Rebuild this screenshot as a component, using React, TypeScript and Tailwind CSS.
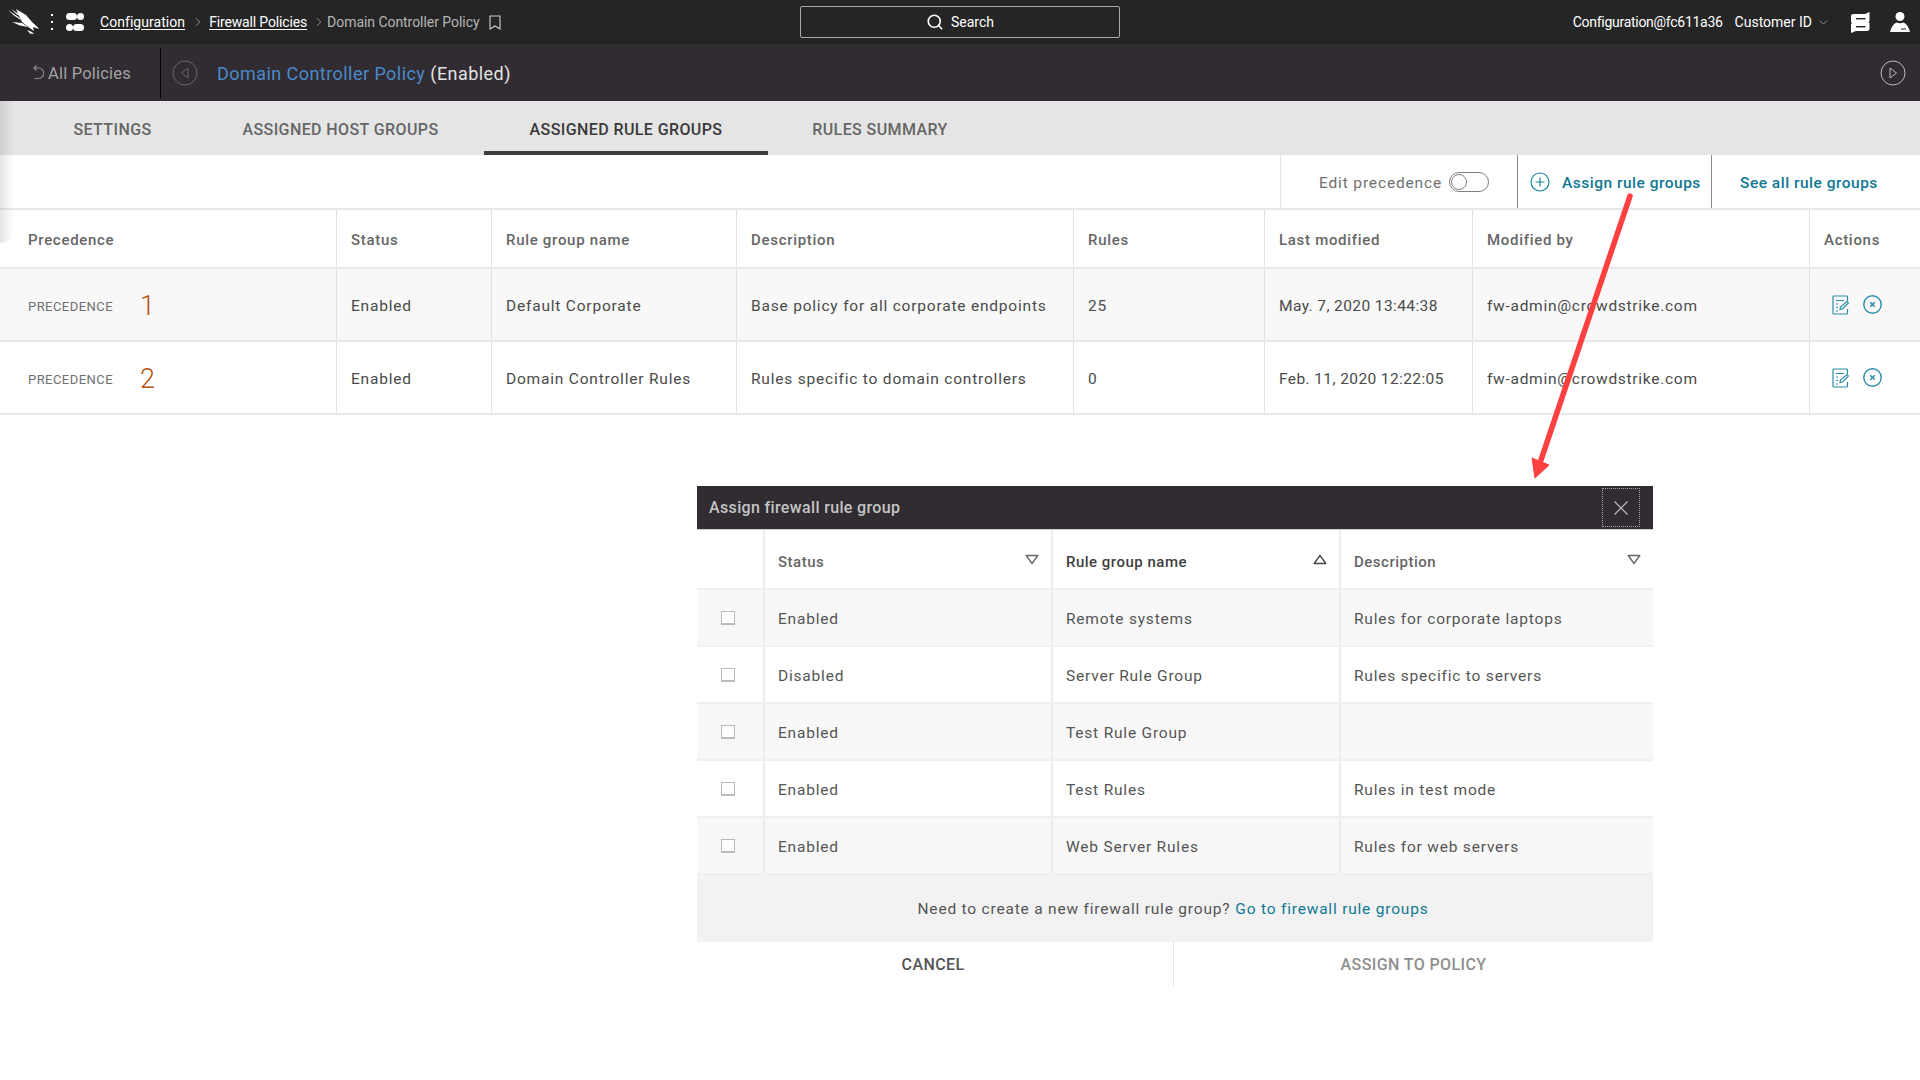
import { ChevronDown, ChevronRight, Search } from "lucide-react";

const font = "font-['Roboto','Liberation_Sans',sans-serif]";

const ruleRows = [
  {
    n: "1",
    status: "Enabled",
    name: "Default Corporate",
    desc: "Base policy for all corporate endpoints",
    rules: "25",
    modified: "May. 7, 2020 13:44:38",
  },
  {
    n: "2",
    status: "Enabled",
    name: "Domain Controller Rules",
    desc: "Rules specific to domain controllers",
    rules: "0",
    modified: "Feb. 11, 2020 12:22:05",
  },
];

const modalRows = [
  ["Enabled", "Remote systems", "Rules for corporate laptops"],
  ["Disabled", "Server Rule Group", "Rules specific to servers"],
  ["Enabled", "Test Rule Group", ""],
  ["Enabled", "Test Rules", "Rules in test mode"],
  ["Enabled", "Web Server Rules", "Rules for web servers"],
];

const tableCols = "grid grid-cols-[336px_155px_245px_337px_191px_208px_337px_111px]";
const modalCols = "grid grid-cols-[66px_288px_288px_314px]";
const cell = "flex items-center border-l border-[#e2e2e2] pl-[14px] pt-[3px]";
const rowCell = "flex items-center border-l border-[#e2e2e2] pl-[14px] pt-[5px]";

function Falcon() {
  return (
    <svg width="32" height="26" viewBox="0 0 32 26" fill="white">
      <path d="M0 1 L12 9 L13 11 L6 6.5 Z" />
      <path d="M3 0 L14 7 L15 9 L9 5.5 Z" />
      <path d="M8 0 L18 6 L24 13 L30 18.5 L31 20 L25 18 L26 22 L21 18.5 L14 13 Z" />
      <path d="M4 13 L14 14 L20 18 L12 16.5 Z" />
      <path d="M19 21 L24 23 L26 25 L22 24.5 Z" />
    </svg>
  );
}

function PillsIcon() {
  return (
    <svg width="18" height="18" viewBox="0 0 18 18" fill="white">
      <rect x="0" y="0" width="11" height="7" rx="3.5" />
      <circle cx="14.5" cy="3.5" r="3.5" />
      <circle cx="3.5" cy="14.5" r="3.5" />
      <rect x="7" y="11" width="11" height="7" rx="3.5" />
    </svg>
  );
}

function StackIcon() {
  return (
    <svg width="19" height="21" viewBox="0 0 19 21" fill="white">
      <path d="M0 4 Q0 2 3 2 H14 L18.5 0 V9 L17.5 10 L18.5 11 V17 Q18.5 19 16 19 H5 L0 21 V12 L1 11 L0 10 Z" />
      <rect x="5" y="6" width="9.5" height="1.4" fill="#252525" />
      <rect x="5" y="14" width="9.5" height="1.4" fill="#252525" />
    </svg>
  );
}

function UserIcon() {
  return (
    <svg width="20" height="20" viewBox="0 0 20 20" fill="white">
      <circle cx="10" cy="4.5" r="4.5" />
      <path d="M6.5 10.5 Q10 12 13.5 10.5 Q18 12.5 20 20 L0 20 Q2 12.5 6.5 10.5 Z" />
      <rect x="11" y="16.5" width="5" height="1" fill="#252525" />
    </svg>
  );
}

function BookmarkIcon() {
  return (
    <svg width="12" height="15" viewBox="0 0 12 15" fill="none" stroke="#cfcfcf" strokeWidth="1.1">
      <path d="M1 1 H11 V14 L6 11 L1 14 Z" />
    </svg>
  );
}

function BackIcon() {
  return (
    <svg width="11" height="15" viewBox="0 0 11 15" fill="none" stroke="#8d8d8d" strokeWidth="1.1">
      <path d="M3.5 0.5 L1 3 L3.5 5.5 M1 3 H5.5 A5 5 0 0 1 5.5 13.5 H1.5" />
    </svg>
  );
}

function CircleArrow({ dir }: { dir: "left" | "right" }) {
  return (
    <svg width="26" height="26" viewBox="0 0 26 26" fill="none" stroke={dir === "left" ? "#666" : "#bbb"} strokeWidth="1">
      <circle cx="13" cy="13" r="12" />
      {dir === "left" ? <path d="M16 8 V18 L9.5 13 Z" /> : <path d="M10 8 V18 L16.5 13 Z" />}
    </svg>
  );
}

function PlusCircle() {
  return (
    <svg width="20" height="20" viewBox="0 0 20 20" fill="none" stroke="#1b83a0" strokeWidth="1.2">
      <circle cx="10" cy="10" r="9" />
      <path d="M10 5.5 V14.5 M5.5 10 H14.5" />
    </svg>
  );
}

function EditIcon() {
  return (
    <svg width="17" height="20" viewBox="0 0 17 20" fill="none" stroke="#2b8ea8" strokeWidth="1.2">
      <path d="M15.5 6 V2 Q15.5 1 14.5 1 H2 Q1 1 1 2 V18 Q1 19 2 19 H14.5 Q15.5 19 15.5 18 V14" />
      <path d="M4 5.5 H12 M4 9 H6 M4 12.5 H6 M4 16 H6" />
      <path d="M8 14.5 L8.5 12 L15 6.5 L16.5 8 L10.5 14 Z" />
    </svg>
  );
}

function RemoveIcon() {
  return (
    <svg width="19" height="19" viewBox="0 0 19 19" fill="none" stroke="#2b8ea8" strokeWidth="1.4">
      <circle cx="9.5" cy="9.5" r="8.7" />
      <path d="M7.2 7.2 L11.8 11.8 M11.8 7.2 L7.2 11.8" strokeWidth="1.5" />
    </svg>
  );
}

function SortTriangle({ up, dark }: { up?: boolean; dark?: boolean }) {
  return (
    <svg width="14" height="11" viewBox="0 0 14 11" fill="none" stroke={dark ? "#444" : "#666"} strokeWidth="1.3" strokeLinejoin="round">
      {up ? <path d="M7 1.5 L12.8 9.5 H1.2 Z" /> : <path d="M7 9.5 L1.2 1.5 H12.8 Z" />}
    </svg>
  );
}

function RedArrow() {
  return (
    <svg className="absolute left-[1520px] top-[190px]" width="120" height="295" viewBox="0 0 120 295" fill="none">
      <path d="M110 6 L21 270" stroke="#ff4040" strokeWidth="5.5" strokeLinecap="round" />
      <path d="M15 288 L12 268 L29 275 Z" fill="#ff4040" stroke="#ff4040" strokeWidth="1" />
    </svg>
  );
}

export default function App() {
  return (
    <div className={`relative h-screen w-[1920px] overflow-hidden bg-white ${font}`}>
      {/* top nav */}
      <div className="flex h-[44px] items-center bg-[#252525] text-[14px] text-white">
        <div className="ml-[8px] flex">
          <Falcon />
        </div>
        <div className="ml-[11px] flex flex-col gap-[5px]">
          <span className="h-[2px] w-[2px] bg-white" />
          <span className="h-[2px] w-[2px] bg-white" />
          <span className="h-[2px] w-[2px] bg-white" />
        </div>
        <div className="ml-[13px]">
          <PillsIcon />
        </div>
        <a className="ml-[16px] underline underline-offset-2 tracking-[0.05px]">Configuration</a>
        <ChevronRight className="ml-[6px] text-[#bbb]" size={14} strokeWidth={1.2} />
        <a className="ml-[4px] underline underline-offset-2 tracking-[-0.15px]">Firewall Policies</a>
        <ChevronRight className="ml-[5px] text-[#bbb]" size={14} strokeWidth={1.2} />
        <span className="ml-[1px] text-[#b5b5b5] tracking-[-0.05px]">Domain Controller Policy</span>
        <span className="ml-[9px] flex">
          <BookmarkIcon />
        </span>
        <div className="absolute left-[800px] top-[6px] flex h-[32px] w-[320px] items-center justify-center gap-[7px] rounded-[2px] border border-[#a8a8a8] text-[14px]">
          <Search size={18} strokeWidth={2.2} />
          Search
        </div>
        <div className="ml-auto flex items-center">
          <span className="tracking-[-0.28px]">Configuration@fc611a36</span>
          <span className="ml-[12px]">Customer ID</span>
          <ChevronDown className="ml-[5px] text-[#bbb]" size={13} strokeWidth={1.3} />
          <span className="ml-[21px] flex">
            <StackIcon />
          </span>
          <span className="ml-[20px] mr-[10px] flex">
            <UserIcon />
          </span>
        </div>
      </div>

      {/* policy header */}
      <div className="flex h-[57px] items-center bg-[#302c32]">
        <div className="flex h-[50px] w-[161px] items-center border-r border-black pl-[33px] text-[16.5px] text-[#a3a3a3]">
          <BackIcon />
          <span className="ml-[4px] pt-[4px] tracking-[0.2px]">All Policies</span>
        </div>
        <div className="ml-[11px] flex">
          <CircleArrow dir="left" />
        </div>
        <span className="ml-[19px] pt-[1px] text-[18px] tracking-[0.45px] text-[#4a8ac9]">Domain Controller Policy</span>
        <span className="ml-[5px] pt-[1px] text-[18px] tracking-[0.45px] text-[#e3e3e3]">(Enabled)</span>
        <div className="ml-auto mr-[14px] flex">
          <CircleArrow dir="right" />
        </div>
      </div>

      {/* tabs */}
      <div className="flex h-[54px] bg-[#e5e5e5] pl-[28px] text-[16px] font-medium tracking-[0.4px] text-[#666]">
        <div className="flex w-[169px] items-center justify-center pt-[3px]">SETTINGS</div>
        <div className="flex w-[287px] items-center justify-center pt-[3px]">ASSIGNED HOST GROUPS</div>
        <div className="flex w-[284px] items-center justify-center border-b-[4px] border-[#3f3b40] pt-[7px] text-[#3a3a3a]">
          ASSIGNED RULE GROUPS
        </div>
        <div className="flex w-[224px] items-center justify-center pt-[3px]">RULES SUMMARY</div>
      </div>

      {/* toolbar */}
      <div className="flex h-[55px] justify-end border-b-[2px] border-[#e8e8e8] text-[15.5px]">
        <div className="flex w-[237px] items-center border-l border-[#e5e5e5] pl-[38px] tracking-[0.85px] text-[#707070]">
          <span className="pt-[4px]">Edit precedence</span>
          <span className="ml-[7px] flex h-[20px] w-[40px] items-center rounded-full border border-[#808080] pl-[1px]">
            <span className="h-[16px] w-[16px] rounded-full border border-[#808080]" />
          </span>
        </div>
        <div className="flex w-[194px] items-center border-l border-[#8a8a8a] pl-[12px] font-medium tracking-[0.5px] text-[#0f7893]">
          <PlusCircle />
          <span className="ml-[12px] pt-[4px]">Assign rule groups</span>
        </div>
        <div className="flex w-[209px] items-center border-l border-[#8a8a8a] pl-[28px] pt-[4px] font-medium tracking-[0.5px] text-[#0f7893]">
          See all rule groups
        </div>
      </div>

      {/* assigned rule groups */}
      <div className={`${tableCols} h-[59px] border-b-[2px] border-[#e8e8e8] text-[15px] font-medium tracking-[0.7px] text-[#666]`}>
        {["Precedence", "Status", "Rule group name", "Description", "Rules", "Last modified", "Modified by", "Actions"].map((h, i) => (
          <div key={h} className={i === 0 ? "flex items-center pl-[28px] pt-[3px]" : cell}>
            {h}
          </div>
        ))}
      </div>
      {ruleRows.map((r, idx) => (
        <div
          key={r.n}
          className={`${tableCols} h-[73px] border-b-[2px] border-[#e8e8e8] text-[15.5px] tracking-[0.8px] text-[#4a4a4a] ${idx === 0 ? "bg-[#f8f8f8]" : "bg-white"}`}
        >
          <div className="flex items-center pl-[28px]">
            <span className="pt-[4px] text-[13px] tracking-[0.45px] text-[#707070]">PRECEDENCE</span>
            <span className="ml-[27px] pt-[4px] text-[27px] font-light leading-none tracking-normal text-[#b4530f]">{r.n}</span>
          </div>
          <div className={rowCell}>{r.status}</div>
          <div className={rowCell}>{r.name}</div>
          <div className={rowCell}>{r.desc}</div>
          <div className={rowCell}>{r.rules}</div>
          <div className={`${rowCell} tracking-[0.4px]`}>{r.modified}</div>
          <div className={`${rowCell} tracking-[0.72px]`}>fw-admin@crowdstrike.com</div>
          <div className="flex items-center gap-[14px] border-l border-[#e2e2e2] pl-[22px]">
            <EditIcon />
            <RemoveIcon />
          </div>
        </div>
      ))}

      {/* assign dialog */}
      <div className="ml-[697px] mt-[71px] w-[956px]">
        <div className="flex h-[44px] items-center justify-between border-b-[1px] border-[#cfcfcf] bg-[#302c32] pl-[12px] pr-[13px] text-[16px] font-medium tracking-[0.35px] text-[#c4c4c4]">
          <span className="pt-[1px]">Assign firewall rule group</span>
          <button className="flex h-[39px] w-[38px] items-center justify-center border border-dotted border-[#a8a8a8] text-[#bdbdbd]">
            <svg width="14" height="14" viewBox="0 0 14 14" stroke="currentColor" strokeWidth="1.2">
              <path d="M0.5 0.5 L13.5 13.5 M13.5 0.5 L0.5 13.5" />
            </svg>
          </button>
        </div>
        <div className={`${modalCols} h-[60px] border-b-[2px] border-[#f0f0f0] text-[15px] font-medium tracking-[0.5px] text-[#666]`}>
          <div />
          <div className="flex items-center justify-between border-l-[2px] border-[#ececec] pl-[13px] pr-[12px]">
            <span className="pt-[6px]">Status</span>
            <SortTriangle />
          </div>
          <div className="flex items-center justify-between border-l-[2px] border-[#ececec] pl-[13px] pr-[12px] text-[#3f3f3f]">
            <span className="pt-[6px]">Rule group name</span>
            <SortTriangle up dark />
          </div>
          <div className="flex items-center justify-between border-l-[2px] border-[#ececec] pl-[13px] pr-[12px]">
            <span className="pt-[6px]">Description</span>
            <SortTriangle />
          </div>
        </div>
        {modalRows.map((r, idx) => (
          <div key={r[1]} className={`${modalCols} h-[57px] border-b-[2px] border-[#f0f0f0] text-[15.5px] tracking-[0.8px] text-[#555] ${idx % 2 === 0 ? "bg-[#f8f8f8]" : "bg-white"}`}>
            <div className="pl-[24px] pt-[21px]">
              <span className="block h-[14px] w-[14px] border border-b-[2px] border-[#bbb] bg-white" />
            </div>
            {r.map((c, i) => (
              <div key={i} className="flex items-center border-l-[2px] border-[#ececec] pl-[13px] pt-[5px]">
                {c}
              </div>
            ))}
          </div>
        ))}
        <div className="flex h-[67px] items-center justify-center bg-[#f2f2f2] pt-[2px] pr-[4px] text-[15.5px] tracking-[0.8px] text-[#555]">
          Need to create a new firewall rule group?
          <a className="ml-[5px] text-[#0f7893]">Go to firewall rule groups</a>
        </div>
        <div className="flex h-[44px] text-[16px] font-medium tracking-[0.4px]">
          <div className="flex w-[476px] items-center justify-center pr-[4px] pt-[2px] text-[#555]">CANCEL</div>
          <div className="flex flex-1 items-center justify-center border-l border-[#e5e5e5] pt-[2px] text-[#8f8f8f]">ASSIGN TO POLICY</div>
        </div>
      </div>

      {/* soft shadow at the left edge */}
      <div className="absolute left-0 top-[101px] h-[142px] w-[14px] rounded-br-[14px] bg-gradient-to-r from-black/10 to-transparent" />
      <RedArrow />
    </div>
  );
}
